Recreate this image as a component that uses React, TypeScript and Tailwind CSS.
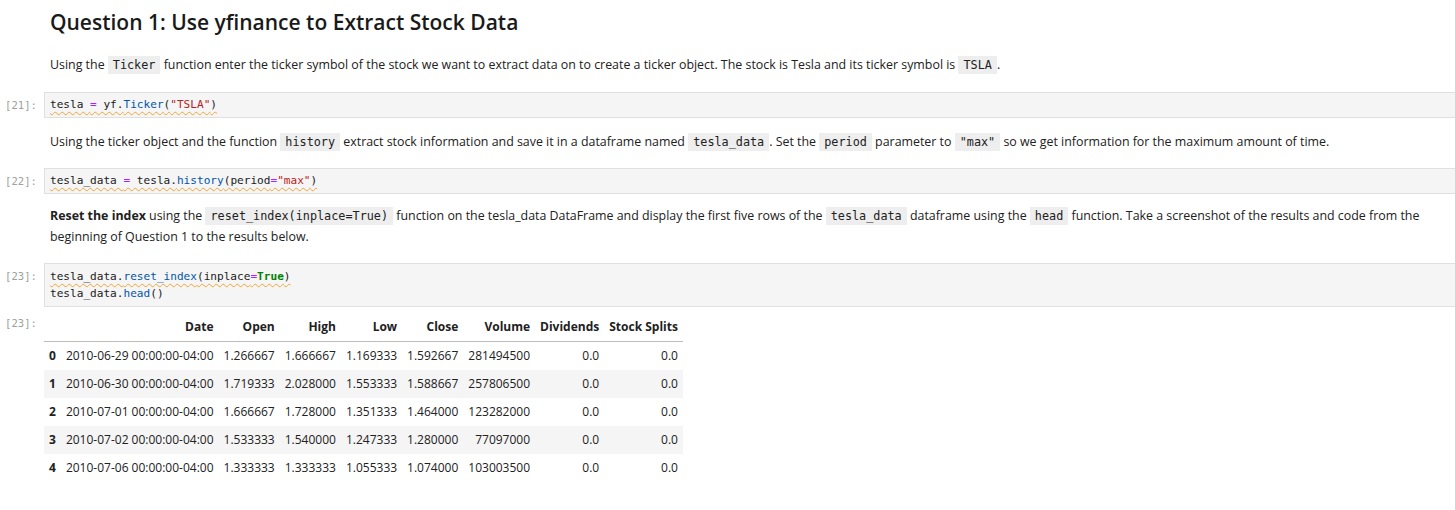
import React from 'react';

const sans = "font-['Open_Sans','Noto_Sans',sans-serif]";
const mono = "font-['DejaVu_Sans_Mono','Liberation_Mono',monospace]";

const Prompt = ({ n, out }: { n: number; out?: boolean }) => (
  <div className={`w-[44px] shrink-0 pr-[7px] text-right text-[10.6px] leading-[16px] text-[#a0a0a0] ${mono} ${out ? 'pt-[2px]' : 'pt-[5px]'}`}>
    [{n}]:
  </div>
);

const Code = ({ children }: { children: React.ReactNode }) => (
  <code className={`${mono} inline-block text-[11.8px] leading-[16px] bg-[#eeeeee] text-[#212121] px-[5px] py-[1px]`}>{children}</code>
);

const wavy = 'underline decoration-wavy decoration-[#f0a535] decoration-1 underline-offset-[3px]';

const rows = [
  ['0', '2010-06-29 00:00:00-04:00', '1.266667', '1.666667', '1.169333', '1.592667', '281494500', '0.0', '0.0'],
  ['1', '2010-06-30 00:00:00-04:00', '1.719333', '2.028000', '1.553333', '1.588667', '257806500', '0.0', '0.0'],
  ['2', '2010-07-01 00:00:00-04:00', '1.666667', '1.728000', '1.351333', '1.464000', '123282000', '0.0', '0.0'],
  ['3', '2010-07-02 00:00:00-04:00', '1.533333', '1.540000', '1.247333', '1.280000', '77097000', '0.0', '0.0'],
  ['4', '2010-07-06 00:00:00-04:00', '1.333333', '1.333333', '1.055333', '1.074000', '103003500', '0.0', '0.0'],
];

const headers = ['', 'Date', 'Open', 'High', 'Low', 'Close', 'Volume', 'Dividends', 'Stock Splits'];

export default function App() {
  return (
    <div className={`w-[1455px] h-[510px] bg-white text-[#212121] overflow-hidden ${sans}`}>
      {/* title */}
      <div className="flex pt-[7px]">
        <div className="w-[44px] shrink-0" />
        <h2 className="pl-[6px] text-[21px] leading-[30px] font-semibold text-[#1a1a1a]">
          Question 1: Use yfinance to Extract Stock Data
        </h2>
      </div>

      <div className="flex mt-[17px]">
        <div className="w-[44px] shrink-0" />
        <p className="pl-[6px] text-[12.4px] leading-[21px]">
          Using the <Code>Ticker</Code> function enter the ticker symbol of the stock we want to extract data on to create a ticker object. The stock is Tesla and its ticker symbol is <Code>TSLA</Code>.
        </p>
      </div>

      <div className="flex mt-[17px] -mr-[4px]">
        <Prompt n={21} />
        <div className={`flex-1 bg-[#f5f5f5] border border-[#e0e0e0] px-[5px] py-[4px] text-[11.1px] leading-[16px] ${mono}`}>
          <span className={wavy}>
            tesla <span className="text-[#aa22ff]">=</span> yf.<span className="text-[#0055aa]">Ticker</span>(<span className="text-[#ba2121]">"TSLA"</span>)
          </span>
        </div>
      </div>

      <div className="flex mt-[13px]">
        <div className="w-[44px] shrink-0" />
        <p className="pl-[6px] text-[12.4px] leading-[21px]">
          Using the ticker object and the function <Code>history</Code> extract stock information and save it in a dataframe named <Code>tesla_data</Code>. Set the <Code>period</Code> parameter to <Code>"max"</Code> so we get information for the maximum amount of time.
        </p>
      </div>

      <div className="flex mt-[16px] -mr-[4px]">
        <Prompt n={22} />
        <div className={`flex-1 bg-[#f5f5f5] border border-[#e0e0e0] px-[5px] py-[4px] text-[11.1px] leading-[16px] ${mono}`}>
          <span className={wavy}>
            tesla_data <span className="text-[#aa22ff]">=</span> tesla.<span className="text-[#0055aa]">history</span>(period<span className="text-[#aa22ff]">=</span><span className="text-[#ba2121]">"max"</span>)
          </span>
        </div>
      </div>

      <div className="flex mt-[11px]">
        <div className="w-[44px] shrink-0" />
        <p className="pl-[6px] pr-[10px] text-[12.4px] leading-[21px]">
          <b className="font-bold">Reset the index</b> using the <Code>reset_index(inplace=True)</Code> function on the tesla_data DataFrame and display the first five rows of the <Code>tesla_data</Code> dataframe using the <Code>head</Code> function. Take a screenshot of the results and code from the beginning of Question 1 to the results below.
        </p>
      </div>

      <div className="flex mt-[16px] -mr-[4px]">
        <Prompt n={23} />
        <div className={`flex-1 bg-[#f5f5f5] border border-[#e0e0e0] px-[5px] py-[4px] text-[11.1px] leading-[17px] ${mono}`}>
          <div>
            <span className={wavy}>
              tesla_data.<span className="text-[#0055aa]">reset_index</span>(inplace<span className="text-[#aa22ff]">=</span><span className="text-[#008000] font-bold">True</span>)
            </span>
          </div>
          <div>
            tesla_data.<span className="text-[#0055aa]">head</span>()
          </div>
        </div>
      </div>

      <div className="flex mt-[6px]">
        <Prompt n={23} out />
        <table className="border-collapse text-[12px] leading-[18px] text-[#212121]">
          <thead>
            <tr className="border-b border-[#bdbdbd]">
              {headers.map((h, i) => (
                <th key={i} className="px-[5px] py-[5px] text-right font-bold whitespace-nowrap">{h}</th>
              ))}
            </tr>
          </thead>
          <tbody>
            {rows.map((r, ri) => (
              <tr key={ri} className={ri % 2 === 1 ? 'bg-[#f5f5f5]' : 'bg-white'}>
                {r.map((c, ci) => (
                  <td key={ci} className={`px-[5px] py-[5px] whitespace-nowrap ${ci === 0 ? 'text-left font-bold' : 'text-right'}`}>{c}</td>
                ))}
              </tr>
            ))}
          </tbody>
        </table>
      </div>
    </div>
  );
}
